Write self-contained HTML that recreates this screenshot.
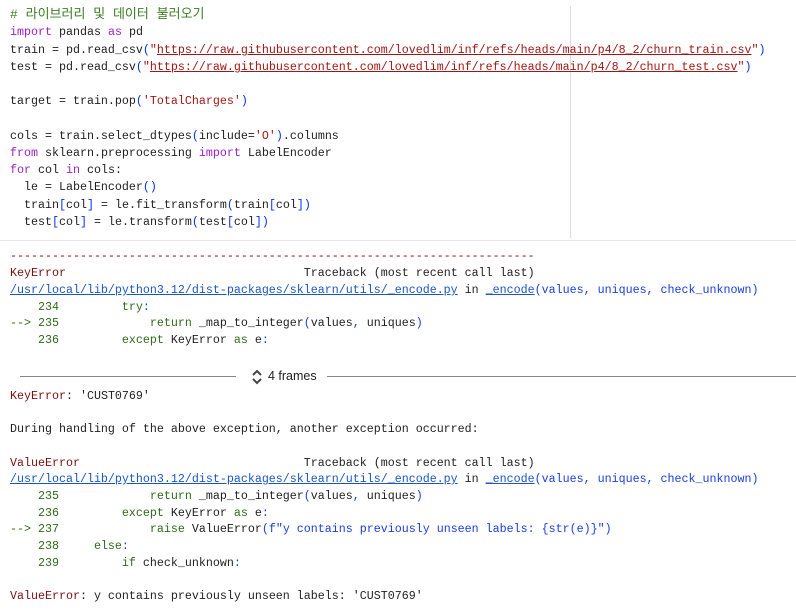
<!DOCTYPE html>
<html><head><meta charset="utf-8"><style>
body{margin:0;width:796px;height:612px;background:#fff;position:relative;overflow:hidden;font-family:"Liberation Mono","Noto Sans CJK KR",monospace;font-size:11.67px;color:#1f1f1f}
.l{position:absolute;left:10px;height:17px;line-height:17px;white-space:pre}
.c{color:#3b7d23}.k{color:#a020c8}.s{color:#a31515}.p{color:#0431fa}
.u{color:#a31515;text-decoration:underline}
.r{color:#7a1010}.lk{color:#1a56c8;text-decoration:underline}
.g{color:#2e6b1a}.b{color:#1a3ee0}
</style></head><body>
<div style="position:absolute;left:570px;top:6px;width:1px;height:232px;background:#ddd"></div>
<div style="position:absolute;left:0;top:240px;width:796px;height:1px;background:#e6e6e6"></div>
<div class="l" style="top:6px"><span class="c" style="font-size:13px"># 라이브러리 및 데이터 불러오기</span></div>
<div class="l" style="top:24px"><span class="k">import</span> pandas <span class="k">as</span> pd</div>
<div class="l" style="top:42px">train = pd.read_csv<span class="p">(</span><span class="s">"</span><span class="u">https://raw.githubusercontent.com/lovedlim/inf/refs/heads/main/p4/8_2/churn_train.csv</span><span class="s">"</span><span class="p">)</span></div>
<div class="l" style="top:59px">test = pd.read_csv<span class="p">(</span><span class="s">"</span><span class="u">https://raw.githubusercontent.com/lovedlim/inf/refs/heads/main/p4/8_2/churn_test.csv</span><span class="s">"</span><span class="p">)</span></div>
<div class="l" style="top:93px">target = train.pop<span class="p">(</span><span class="s">'TotalCharges'</span><span class="p">)</span></div>
<div class="l" style="top:128px">cols = train.select_dtypes<span class="p">(</span>include=<span class="s">'O'</span><span class="p">)</span>.columns</div>
<div class="l" style="top:145px"><span class="k">from</span> sklearn.preprocessing <span class="k">import</span> LabelEncoder</div>
<div class="l" style="top:162px"><span class="k">for</span> col <span class="k">in</span> cols:</div>
<div class="l" style="top:179px">  le = LabelEncoder<span class="p">()</span></div>
<div class="l" style="top:197px">  train<span class="p">[</span>col<span class="p">]</span> = le.fit_transform<span class="p">(</span>train<span class="p">[</span>col<span class="p">])</span></div>
<div class="l" style="top:214px">  test<span class="p">[</span>col<span class="p">]</span> = le.transform<span class="p">(</span>test<span class="p">[</span>col<span class="p">])</span></div>

<div class="l r" style="top:248px">---------------------------------------------------------------------------</div>
<div class="l" style="top:265px"><span class="r">KeyError</span>                                  Traceback (most recent call last)</div>
<div class="l" style="top:282px"><span class="lk">/usr/local/lib/python3.12/dist-packages/sklearn/utils/_encode.py</span> in <span class="lk">_encode</span><span class="b">(values, uniques, check_unknown)</span></div>
<div class="l" style="top:299px"><span class="g">    234         try</span><span class="b">:</span></div>
<div class="l" style="top:315px"><span class="g">--&gt; 235             return</span> _map_to_integer<span class="b">(</span>values<span class="b">,</span> uniques<span class="b">)</span></div>
<div class="l" style="top:332px"><span class="g">    236         except</span> KeyError <span class="g">as</span> e<span class="b">:</span></div>
<div style="position:absolute;left:20px;top:376px;width:216px;height:1px;background:#888"></div>
<div style="position:absolute;left:327px;top:376px;width:469px;height:1px;background:#888"></div>
<svg style="position:absolute;left:251px;top:369px" width="12" height="16" viewBox="0 0 12 16"><path d="M2 6 L6 2 L10 6 M2 10 L6 14 L10 10" fill="none" stroke="#444" stroke-width="2"/></svg>
<div style="position:absolute;left:268px;top:369px;font:12.5px 'Liberation Sans',sans-serif;color:#222">4 frames</div>
<div class="l" style="top:388px"><span class="r">KeyError</span>: 'CUST0769'</div>
<div class="l" style="top:421px">During handling of the above exception, another exception occurred:</div>
<div class="l" style="top:455px"><span class="r">ValueError</span>                                Traceback (most recent call last)</div>
<div class="l" style="top:471px"><span class="lk">/usr/local/lib/python3.12/dist-packages/sklearn/utils/_encode.py</span> in <span class="lk">_encode</span><span class="b">(values, uniques, check_unknown)</span></div>
<div class="l" style="top:488px"><span class="g">    235             return</span> _map_to_integer<span class="b">(</span>values<span class="b">,</span> uniques<span class="b">)</span></div>
<div class="l" style="top:505px"><span class="g">    236         except</span> KeyError <span class="g">as</span> e<span class="b">:</span></div>
<div class="l" style="top:521px"><span class="g">--&gt; 237             raise</span> ValueError<span class="b">(f"y contains previously unseen labels: {str(e)}")</span></div>
<div class="l" style="top:538px"><span class="g">    238     else</span><span class="b">:</span></div>
<div class="l" style="top:555px"><span class="g">    239         if</span> check_unknown<span class="b">:</span></div>
<div class="l" style="top:588px"><span class="r">ValueError</span>: y contains previously unseen labels: 'CUST0769'</div>
</body></html>
